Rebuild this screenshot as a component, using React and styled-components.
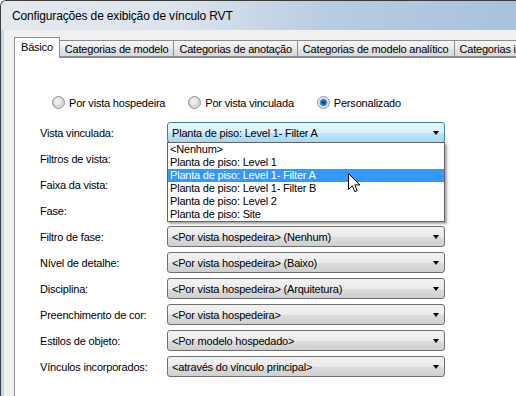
import React from "react";
import styled, { createGlobalStyle } from "styled-components";

const GlobalStyle = createGlobalStyle`
  html, body {
    margin: 0;
    padding: 0;
    overflow: hidden;
    background: #ffffff;
  }
`;

const App = () => {
  const options = [
    "<Nenhum>",
    "Planta de piso: Level 1",
    "Planta de piso: Level 1- Filter A",
    "Planta de piso: Level 1- Filter B",
    "Planta de piso: Level 2",
    "Planta de piso: Site",
  ];

  const rows = [
    { label: "Filtros de vista:", value: "" },
    { label: "Faixa da vista:", value: "" },
    { label: "Fase:", value: "" },
    { label: "Filtro de fase:", value: "<Por vista hospedeira> (Nenhum)" },
    { label: "Nível de detalhe:", value: "<Por vista hospedeira> (Baixo)" },
    { label: "Disciplina:", value: "<Por vista hospedeira> (Arquitetura)" },
    { label: "Preenchimento de cor:", value: "<Por vista hospedeira>" },
    { label: "Estilos de objeto:", value: "<Por modelo hospedado>" },
    { label: "Vínculos incorporados:", value: "<através do vínculo principal>" },
  ];

  return (
    <>
      <GlobalStyle />
      <Window>
        <TitleBar>Configurações de exibição de vínculo RVT</TitleBar>
        <Client>
          <TabRow>
            <Tab $active>Básico</Tab>
            <Tab>Categorias de modelo</Tab>
            <Tab>Categorias de anotação</Tab>
            <Tab>Categorias de modelo analítico</Tab>
            <Tab>Categorias importadas</Tab>
          </TabRow>
          <Panel>
            <RadioRow>
              <RadioOption>
                <Radio />
                Por vista hospedeira
              </RadioOption>
              <RadioOption>
                <Radio />
                Por vista vinculada
              </RadioOption>
              <RadioOption>
                <Radio $checked />
                Personalizado
              </RadioOption>
            </RadioRow>
            <Form>
              <Label>Vista vinculada:</Label>
              <ComboWrap>
                <Combo $open>
                  <span>Planta de piso: Level 1- Filter A</span>
                  <Arrow />
                </Combo>
                <DropList>
                  {options.map((o, i) => (
                    <DropItem key={o} $selected={i === 2}>
                      {o}
                    </DropItem>
                  ))}
                  <Cursor width="13" height="20" viewBox="0 0 13 20">
                    <path
                      d="M0.5 0.5 L0.5 16.5 L4.3 12.8 L6.8 18.6 L9.2 17.6 L6.8 11.9 L12 11.9 Z"
                      fill="#ffffff"
                      stroke="#000000"
                      strokeWidth="1"
                    />
                  </Cursor>
                </DropList>
              </ComboWrap>
              {rows.map((r) => (
                <React.Fragment key={r.label}>
                  <Label>{r.label}</Label>
                  <Combo>
                    <span>{r.value}</span>
                    <Arrow />
                  </Combo>
                </React.Fragment>
              ))}
            </Form>
          </Panel>
        </Client>
      </Window>
    </>
  );
};

export default App;

const font = `
  font-family: "Liberation Sans", Arial, sans-serif;
  font-size: 11px;
  letter-spacing: -0.2px;
  color: #000000;
`;

const Window = styled.div`
  width: 516px;
  height: 396px;
  box-sizing: border-box;
  border-top: 1px solid #3c3c3c;
  border-left: 1px solid #3c3c3c;
  border-top-left-radius: 6px;
  background: linear-gradient(to right, #c3d7eb, #b6cce4);
  display: flex;
  flex-direction: column;
  overflow: hidden;
`;

const TitleBar = styled.div`
  height: 29px;
  flex-shrink: 0;
  display: flex;
  align-items: center;
  padding-left: 11px;
  font-family: "Liberation Sans", Arial, sans-serif;
  font-size: 12px;
  letter-spacing: -0.15px;
  color: #000000;
  background: linear-gradient(
    to right,
    #e4e9ef 0%,
    #dbe3ec 35%,
    #b9cde3 62%,
    #a7c1de 100%
  );
`;

const Client = styled.div`
  flex: 1;
  margin-left: 3px;
  background: #f0f0f0;
  padding: 7px 0 0 10px;
  display: flex;
  flex-direction: column;
  overflow: hidden;
`;

const TabRow = styled.div`
  display: flex;
  align-items: flex-end;
  height: 20px;
  flex-shrink: 0;
  white-space: nowrap;
`;

const Tab = styled.div`
  ${font}
  box-sizing: border-box;
  flex-shrink: 0;
  height: ${(p) => (p.$active ? "21px" : "17px")};
  margin-bottom: ${(p) => (p.$active ? "-1px" : "0")};
  padding: ${(p) => (p.$active ? "0 6px 2px" : "0 5px")};
  margin-left: ${(p) => (p.$active ? "0" : "-1px")};
  border: 1px solid #898c95;
  border-bottom: ${(p) => (p.$active ? "none" : "1px solid #898c95")};
  background: ${(p) =>
    p.$active
      ? "#ffffff"
      : "linear-gradient(#f5f5f5, #ebebeb 50%, #e2e2e2 51%, #dadada)"};
  display: flex;
  align-items: center;
  position: relative;
  z-index: ${(p) => (p.$active ? 2 : 1)};
  &:first-child {
    margin-left: 0;
  }
`;

const Panel = styled.div`
  flex: 1;
  margin: 0 -30px -30px 0;
  background: #ffffff;
  border: 1px solid #898c95;
  padding: 38px 0 0 25px;
`;

const RadioRow = styled.div`
  display: flex;
  gap: 23px;
  padding-left: 12px;
  height: 13px;
  margin-bottom: 13px;
`;

const RadioOption = styled.label`
  ${font}
  display: flex;
  align-items: center;
  gap: 4px;
  white-space: nowrap;
`;

const Radio = styled.span`
  width: 13px;
  height: 13px;
  box-sizing: border-box;
  border-radius: 50%;
  border: 1px solid #8f9092;
  background: ${(p) =>
    p.$checked
      ? "radial-gradient(circle at 50% 50%, #0d2f57 0, #1e5b96 1.5px, #3a8ad2 3px, #7bbdf0 3.8px, #dfe6ee 4.2px, #f4f6f8 6px)"
      : "radial-gradient(circle at 45% 40%, #f8f8f8 0, #e6e6e6 3px, #cdcdcd 5.5px, #e8e8e8 6px)"};
  display: inline-block;
`;

const Form = styled.div`
  display: grid;
  grid-template-columns: 127px 278px;
  grid-auto-rows: 21px;
  row-gap: 5px;
`;

const Label = styled.div`
  ${font}
  display: flex;
  align-items: center;
  white-space: nowrap;
`;

const ComboWrap = styled.div`
  position: relative;
  z-index: 5;
`;

const Combo = styled.div`
  ${font}
  box-sizing: border-box;
  height: 21px;
  border: 1px solid ${(p) => (p.$open ? "#3c7fb1" : "#707070")};
  border-radius: 3px;
  background: ${(p) =>
    p.$open
      ? "linear-gradient(#eaf6fd, #d9f0fc 50%, #bee6fd 51%, #a7d9f5)"
      : "linear-gradient(#f2f2f2, #ebebeb 50%, #dddddd 51%, #cfcfcf)"};
  display: flex;
  align-items: center;
  justify-content: space-between;
  padding: 0 5px 0 4px;
  white-space: nowrap;
  overflow: hidden;
`;

const Arrow = styled.span`
  width: 0;
  height: 0;
  border-left: 3.5px solid transparent;
  border-right: 3.5px solid transparent;
  border-top: 4px solid #000000;
  flex-shrink: 0;
`;

const DropList = styled.div`
  position: absolute;
  top: 20px;
  left: 0;
  width: 100%;
  box-sizing: border-box;
  background: #ffffff;
  border: 1px solid #646464;
  box-shadow: 2px 2px 2px rgba(0, 0, 0, 0.35);
`;

const DropItem = styled.div`
  ${font}
  height: 13px;
  line-height: 13px;
  padding-left: 2px;
  white-space: nowrap;
  background: ${(p) => (p.$selected ? "#3399ff" : "transparent")};
  color: ${(p) => (p.$selected ? "#ffffff" : "#000000")};
`;

const Cursor = styled.svg`
  position: absolute;
  left: 180px;
  top: 30px;
`;
